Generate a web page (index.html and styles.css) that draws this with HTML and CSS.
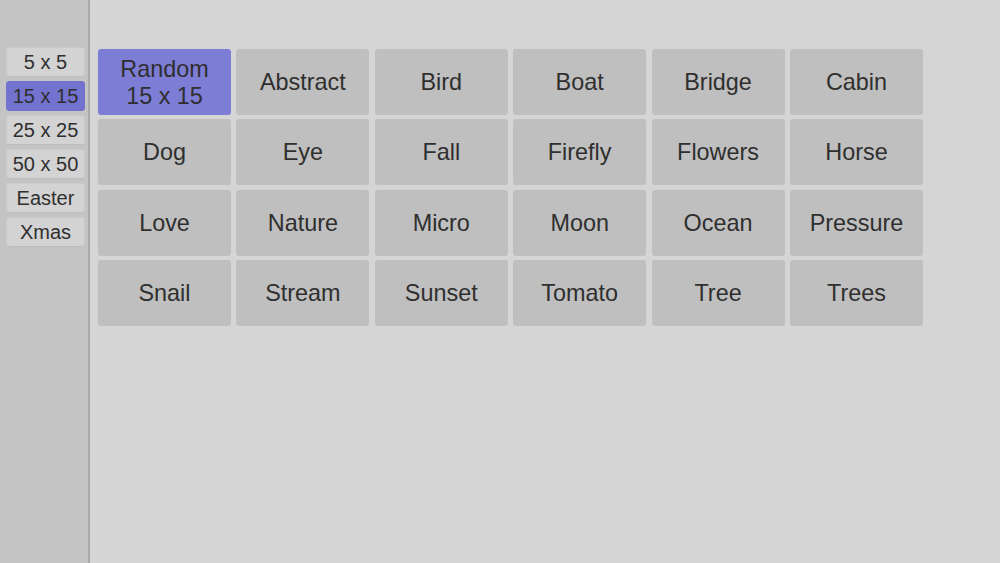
FILE: index.html
```html
<!DOCTYPE html>
<html lang="en">
<head>
  <meta charset="UTF-8">
  <title>Puzzles</title>
  <link rel="stylesheet" href="styles.css">
</head>
<body>
  <div class="app">
    <nav class="sidebar">
      <button class="size">5 x 5</button>
      <button class="size active">15 x 15</button>
      <button class="size">25 x 25</button>
      <button class="size">50 x 50</button>
      <button class="size">Easter</button>
      <button class="size">Xmas</button>
    </nav>

    <main class="board">
      <div class="puzzles">
        <button class="puzzle random">Random<br>15 x 15</button>
        <button class="puzzle">Abstract</button>
        <button class="puzzle">Bird</button>
        <button class="puzzle">Boat</button>
        <button class="puzzle">Bridge</button>
        <button class="puzzle">Cabin</button>
        <button class="puzzle">Dog</button>
        <button class="puzzle">Eye</button>
        <button class="puzzle">Fall</button>
        <button class="puzzle">Firefly</button>
        <button class="puzzle">Flowers</button>
        <button class="puzzle">Horse</button>
        <button class="puzzle">Love</button>
        <button class="puzzle">Nature</button>
        <button class="puzzle">Micro</button>
        <button class="puzzle">Moon</button>
        <button class="puzzle">Ocean</button>
        <button class="puzzle">Pressure</button>
        <button class="puzzle">Snail</button>
        <button class="puzzle">Stream</button>
        <button class="puzzle">Sunset</button>
        <button class="puzzle">Tomato</button>
        <button class="puzzle">Tree</button>
        <button class="puzzle">Trees</button>
      </div>
    </main>
  </div>
</body>
</html>
```

FILE: styles.css
```css
:root {
  --page: #d5d5d5;
  --side: #c4c4c4;
  --side-line: #a9a9a9;
  --tile: #bfbfbf;
  --chip: #d3d3d3;
  --accent: #7d7dd6;
  --accent-dark: #7373cf;
  --text: #2f2f2f;
}

* {
  margin: 0;
  padding: 0;
  box-sizing: border-box;
}

body {
  font-family: "Liberation Sans", Arial, sans-serif;
  background-color: var(--page);
  color: var(--text);
  height: 100vh;
  overflow: hidden;
}

button {
  font-family: inherit;
  color: var(--text);
  border: none;
  cursor: pointer;
}

.app {
  display: flex;
  height: 100%;
}

.sidebar {
  width: 90px;
  flex-shrink: 0;
  background-color: var(--side);
  border-right: 2px solid var(--side-line);
  display: flex;
  flex-direction: column;
  gap: 4px;
  padding: 47px 0 0 6px;
}

.size {
  width: 79px;
  height: 30px;
  font-size: 20px;
  background-color: var(--chip);
  border: 1px solid #cacaca;
  border-bottom-color: #bdbdbd;
  border-radius: 3px;
}

.size.active {
  background-color: var(--accent-dark);
  border-color: var(--accent-dark);
}

.board {
  flex: 1;
  padding: 49px 0 0 8px;
}

.puzzles {
  display: grid;
  grid-template-columns: repeat(6, 133px);
  grid-auto-rows: 66px;
  column-gap: 5.4px;
  row-gap: 4.4px;
}

.puzzle {
  font-size: 23.4px;
  line-height: 27px;
  padding-top: 1px;
  background-color: var(--tile);
  border-radius: 3px;
}

.puzzle.random {
  background-color: var(--accent);
}
```
